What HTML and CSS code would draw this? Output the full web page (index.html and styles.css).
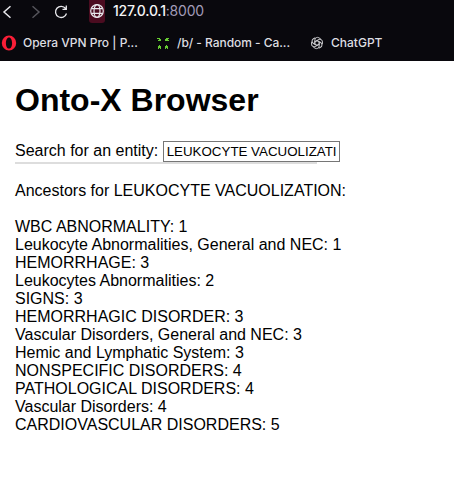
FILE: index.html
```html
<!DOCTYPE html>
<html lang="en">
<head>
<meta charset="utf-8">
<title>Onto-X Browser</title>
<link rel="stylesheet" href="styles.css">
</head>
<body>
<header class="chrome">
  <div class="toolbar">
    <svg class="back" width="12" height="16" viewBox="0 0 12 16"><path d="M9.500 2.200 3 8l6.500 5.800"/></svg>
    <svg class="forward" width="12" height="16" viewBox="0 0 12 16"><path d="M2.500 2.200 9 8l-6.500 5.800"/></svg>
    <svg class="reload" width="16" height="16" viewBox="0 0 16 16"><path d="M12.600 4.500A5.600 5.600 0 1 0 13.500 9.500M13.300 1.500v3.800H9.500"/></svg>
    <span class="site"><svg width="14" height="14" viewBox="0 0 14 14"><circle cx="7" cy="7" r="6.300"/><ellipse cx="7" cy="7" rx="3" ry="6.300"/><path d="M1.500 4.700h11M1.500 9.300h11"/></svg></span>
    <span class="address">127.0.0.1<span class="port">:8000</span></span>
  </div>
  <nav class="bookmarks">
    <a class="bookmark opera"><svg width="16" height="16" viewBox="0 0 16 16"><path fill="#fa1e37" fill-rule="evenodd" d="M8 .6a7.200 7.400 0 1 0 0 14.800A7.200 7.400 0 1 0 8 .6zM8 2.400c1.900 0 3.100 2.500 3.100 5.600S9.900 13.600 8 13.600 4.900 11.100 4.900 8 6.100 2.400 8 2.400z"/></svg><span>Opera VPN Pro | P...</span></a>
    <a class="bookmark random"><svg width="14" height="14" viewBox="0 0 14 14"><path fill="#66cc33" d="M1 2h3v1h1v2H2V4h1V3H1zM9 3h1V2h3v1h-1v1h1v1H9zM3 9h1v1h1v3H4v-1H3v1H2v-3h1zM10 9h1v1h1v3h-1v-1h-1v1H9v-3h1z"/></svg><span>/b/ - Random - Ca...</span></a>
    <a class="bookmark chat"><svg width="14" height="14" viewBox="0 0 14 14"><g fill="none" stroke="#c9c9cc" stroke-width="1"><path id="petal" d="M7 4.500 9.200 5.800V9.900a2.700 2.700 0 0 1-4.100 2.300L3.200 11"/><use href="#petal" transform="rotate(60 7 7)"/><use href="#petal" transform="rotate(120 7 7)"/><use href="#petal" transform="rotate(180 7 7)"/><use href="#petal" transform="rotate(240 7 7)"/><use href="#petal" transform="rotate(300 7 7)"/></g></svg><span>ChatGPT</span></a>
  </nav>
</header>
<main>
  <h1>Onto-X Browser</h1>
  <div class="search">
    <label for="entity">Search for an entity:</label>
    <input id="entity" type="text" value="LEUKOCYTE VACUOLIZATION">
  </div>
  <p>Ancestors for LEUKOCYTE VACUOLIZATION:</p>
  <ul>
    <li>WBC ABNORMALITY: 1</li>
    <li>Leukocyte Abnormalities, General and NEC: 1</li>
    <li>HEMORRHAGE: 3</li>
    <li>Leukocytes Abnormalities: 2</li>
    <li>SIGNS: 3</li>
    <li>HEMORRHAGIC DISORDER: 3</li>
    <li>Vascular Disorders, General and NEC: 3</li>
    <li>Hemic and Lymphatic System: 3</li>
    <li>NONSPECIFIC DISORDERS: 4</li>
    <li>PATHOLOGICAL DISORDERS: 4</li>
    <li>Vascular Disorders: 4</li>
    <li>CARDIOVASCULAR DISORDERS: 5</li>
  </ul>
</main>
</body>
</html>
```
FILE: styles.css
```css
* { box-sizing: border-box; }
body {
  margin: 0;
  background: #fff;
  color: #000;
  font: 16px/18px "Liberation Sans", Arial, sans-serif;
  overflow: hidden;
}
.chrome {
  height: 61px;
  background: #09080d;
  font-family: Inter, sans-serif;
  white-space: nowrap;
}
.toolbar {
  display: flex;
  align-items: center;
  height: 23px;
  padding-left: 1px;
}
.toolbar svg {
  flex: none;
  fill: none;
  stroke: #e8e8ec;
  stroke-width: 1.5;
}
.toolbar .forward { margin-left: 17px; stroke: #55545b; }
.toolbar .reload { margin-left: 11px; stroke-width: 1.3; }
.site {
  display: flex;
  align-items: center;
  justify-content: center;
  width: 16px;
  height: 23px;
  margin-left: 20px;
  padding-bottom: 1px;
  border-radius: 0 0 3px 3px;
  background: #4b0c20;
}
.toolbar .site svg { stroke-width: 1.2; }
.address {
  margin-left: 8px;
  padding-bottom: 2px;
  color: #f4f4f6;
  font-size: 14px;
  font-weight: 500;
  letter-spacing: -0.2px;
}
.port { color: #a29bb8; font-weight: 400; }
.bookmarks {
  display: flex;
  height: 38px;
  padding-top: 11px;
  font-size: 12px;
  font-weight: 500;
  color: #dedee2;
}
.bookmark {
  display: flex;
  align-items: center;
  height: 18px;
  flex: none;
}
.opera { width: 155px; padding-left: 1px; gap: 6px; }
.random { width: 155px; padding-left: 1px; gap: 7px; letter-spacing: -0.04px; }
.chat { gap: 7px; }
main { padding: 21px 15px 0; }
h1 {
  margin: 0;
  font-size: 32px;
  line-height: 37px;
}
.search {
  display: flex;
  align-items: flex-start;
  gap: 5px;
  width: 302px;
  height: 23px;
  margin-top: 22px;
  border-bottom: 2px solid #ddd;
  white-space: nowrap;
}
.search label { padding-top: 1px; }
.search input {
  flex: none;
  width: 177px;
  height: 21px;
  margin: 0;
  padding: 1px 3px 1px 2.5px;
  border: 1px solid #767676;
  background: #fff;
  color: #000;
  font: 13.333px "Liberation Sans", Arial, sans-serif;
}
p { margin: 18px 0; }
ul { margin: 0; padding: 0; list-style: none; }
```
